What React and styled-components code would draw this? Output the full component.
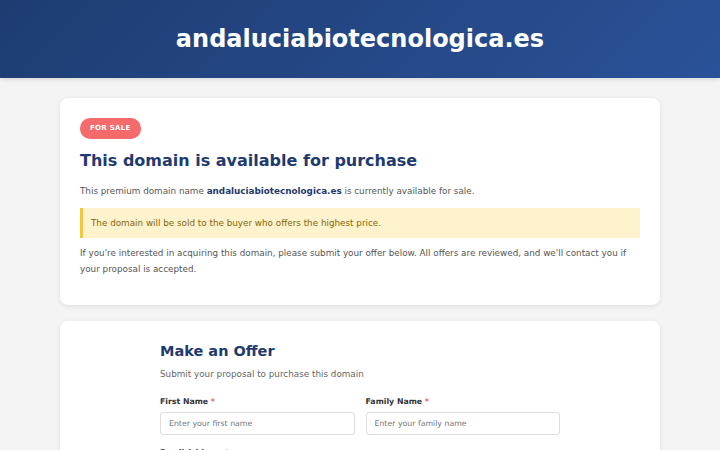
import styled, { createGlobalStyle } from "styled-components";

const GlobalStyle = createGlobalStyle`
  * { box-sizing: border-box; }
  body {
    margin: 0;
    background: #f4f4f4;
    font-family: "DejaVu Sans", "Noto Sans", sans-serif;
    color: #444;
  }
`;

const Header = styled.header`
  height: 78px;
  display: flex;
  align-items: center;
  justify-content: center;
  background: linear-gradient(135deg, #1e3c72 0%, #2a5298 100%);
  box-shadow: 0 2px 4px rgba(0, 0, 0, 0.1);
`;

const SiteTitle = styled.h1`
  margin: 0;
  color: #fff;
  font-size: 24px;
  font-weight: 700;
`;

const Main = styled.main`
  max-width: 600px;
  margin: 20px auto 0;
  display: flex;
  flex-direction: column;
  gap: 16px;
`;

const Card = styled.section`
  background: #fff;
  border-radius: 8px;
  box-shadow: 0 1px 5px rgba(0, 0, 0, 0.09);
  padding: 20px 20px 28px;
`;

const Badge = styled.span`
  display: block;
  width: fit-content;
  background: #f56b6b;
  color: #fff;
  font-size: 7px;
  line-height: 9px;
  font-weight: 700;
  letter-spacing: 0.3px;
  text-transform: uppercase;
  padding: 6px 10px;
  border-radius: 10px;
`;

const Title = styled.h2`
  margin: 12px 0 12px;
  color: #1e3a6e;
  font-size: 16px;
  line-height: 20px;
  font-weight: 700;
`;

const Text = styled.p`
  margin: 0;
  font-size: 8.8px;
  line-height: 16px;
  color: #555;

  strong {
    color: #1e3a6e;
  }
`;

const Notice = styled.div`
  margin: 9px 0 7px;
  background: #fff3cd;
  border-left: 3px solid #f4c542;
  color: #856404;
  font-size: 8.8px;
  padding: 7px 8px;
  line-height: 16px;
`;

const Form = styled.form`
  max-width: 400px;
  margin: 0 auto;
`;

const FormTitle = styled.h2`
  margin: 2px 0 0;
  color: #1e3a6e;
  font-size: 14.5px;
  line-height: 17px;
  font-weight: 700;
`;

const Subtitle = styled.p`
  margin: 7px 0 15px;
  font-size: 8.8px;
  line-height: 14px;
  color: #666;
`;

const Row = styled.div`
  display: grid;
  grid-template-columns: 1fr 1fr;
  gap: 11px;
  margin-bottom: 12px;
`;

const Field = styled.label`
  display: flex;
  flex-direction: column;
  gap: 5px;
  font-size: 7.8px;
  line-height: 11px;
  font-weight: 700;
  color: #333;
`;

const Req = styled.span`
  color: #e05a5a;
`;

const Input = styled.input`
  height: 23px;
  border: 1px solid #ddd;
  border-radius: 3px;
  padding: 0 8px;
  font-family: inherit;
  font-size: 7.8px;
  color: #333;

  &::placeholder {
    color: #777;
  }
`;

export default function App() {
  return (
    <>
      <GlobalStyle />
      <Header>
        <SiteTitle>andaluciabiotecnologica.es</SiteTitle>
      </Header>
      <Main>
        <Card>
          <Badge>For Sale</Badge>
          <Title>This domain is available for purchase</Title>
          <Text>
            This premium domain name <strong>andaluciabiotecnologica.es</strong>{" "}
            is currently available for sale.
          </Text>
          <Notice>The domain will be sold to the buyer who offers the highest price.</Notice>
          <Text>
            If you're interested in acquiring this domain, please submit your offer
            below. All offers are reviewed, and we'll contact you if your proposal is
            accepted.
          </Text>
        </Card>
        <Card>
          <Form>
            <FormTitle>Make an Offer</FormTitle>
            <Subtitle>Submit your proposal to purchase this domain</Subtitle>
            <Row>
              <Field>
                <span>
                  First Name <Req>*</Req>
                </span>
                <Input placeholder="Enter your first name" />
              </Field>
              <Field>
                <span>
                  Family Name <Req>*</Req>
                </span>
                <Input placeholder="Enter your family name" />
              </Field>
            </Row>
            <Field>
              <span>
                Email Address <Req>*</Req>
              </span>
              <Input placeholder="Enter your email address" />
            </Field>
          </Form>
        </Card>
      </Main>
    </>
  );
}
